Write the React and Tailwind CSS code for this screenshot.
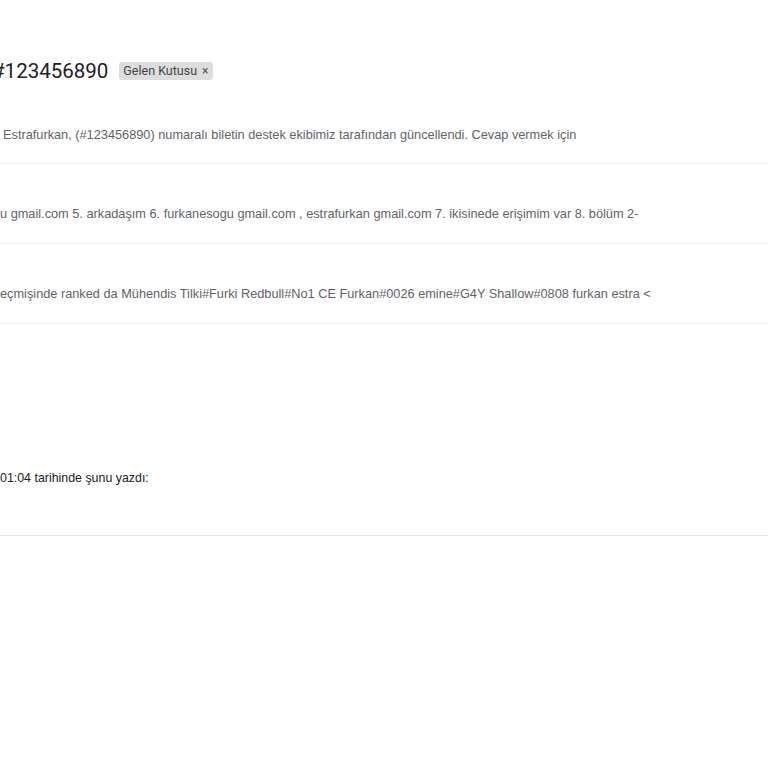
export default function App() {
  const body = { fontFamily: '"Liberation Sans", Arial, sans-serif' };
  return (
    <div className="w-[768px] h-[768px] overflow-hidden bg-white relative">
      <div className="flex flex-col">
        <div className="h-[57px]" />
        <div className="flex items-center h-[28px] ml-[-8px]">
          <h1
            className="text-[20.5px] leading-[28px] text-[#202124] font-normal"
            style={{ fontFamily: 'Roboto, "Open Sans", sans-serif' }}
          >
            #123456890
          </h1>
          <span
            className="ml-[11px] h-[18px] pl-[4px] pr-[5px] flex items-center gap-[5px] rounded-[3px] bg-[#dddddd] text-[12.5px] text-[#444] leading-none"
            style={{ fontFamily: 'Roboto, Arial, sans-serif' }}
          >
            Gelen Kutusu
            <span className="text-[12px] text-[#555]">×</span>
          </span>
        </div>
        <div style={body} className="text-[12.75px] text-[#5f6368]">
          <div className="h-[78px] flex items-end pb-[19px] pl-[3px] whitespace-nowrap">
            Estrafurkan, (#123456890) numaralı biletin destek ekibimiz tarafından güncellendi. Cevap vermek için
          </div>
          <div className="h-px bg-[#eeeeee]" />
          <div className="h-[79px] flex items-center pt-[20px] whitespace-nowrap">
            u gmail.com 5. arkadaşım 6. furkanesogu gmail.com , estrafurkan gmail.com 7. ikisinede erişimim var 8. bölüm 2-
          </div>
          <div className="h-px bg-[#eeeeee]" />
          <div className="h-[79px] flex items-center pt-[20px] whitespace-nowrap">
            eçmişinde ranked da Mühendis Tilki#Furki Redbull#No1 CE Furkan#0026 emine#G4Y Shallow#0808 furkan estra &lt;
          </div>
          <div className="h-px bg-[#eeeeee]" />
          <div className="h-[146px]" />
          <div className="h-[16px] flex items-center text-[12.4px] text-[#222222] whitespace-nowrap">
            01:04 tarihinde şunu yazdı:
          </div>
          <div className="h-[49px]" />
          <div className="h-px bg-[#e6e6e6]" />
        </div>
      </div>
    </div>
  );
}
